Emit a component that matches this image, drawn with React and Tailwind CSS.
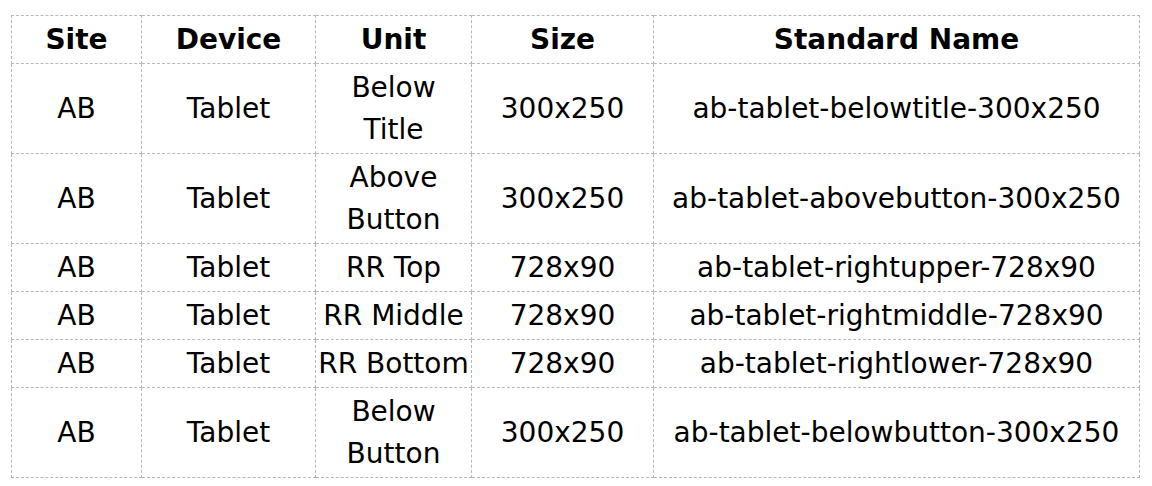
const rows = [
  ["AB", "Tablet", ["Below", "Title"], "300x250", "ab-tablet-belowtitle-300x250"],
  ["AB", "Tablet", ["Above", "Button"], "300x250", "ab-tablet-abovebutton-300x250"],
  ["AB", "Tablet", ["RR Top"], "728x90", "ab-tablet-rightupper-728x90"],
  ["AB", "Tablet", ["RR Middle"], "728x90", "ab-tablet-rightmiddle-728x90"],
  ["AB", "Tablet", ["RR Bottom"], "728x90", "ab-tablet-rightlower-728x90"],
  ["AB", "Tablet", ["Below", "Button"], "300x250", "ab-tablet-belowbutton-300x250"],
];

const heads = ["Site", "Device", "Unit", "Size", "Standard Name"];

const cell = "border border-dashed border-[#b8b8b8] px-0 py-[2.5px] whitespace-nowrap";

export default function App() {
  return (
    <div className="w-[1152px] h-[486px] bg-white pt-[15px] pl-[11px] font-['DejaVu_Sans',Verdana,sans-serif] text-black">
      <table className="table-fixed border-collapse text-[28px] leading-[42px] text-center w-[1128px]">
        <colgroup>
          <col className="w-[130px]" />
          <col className="w-[174px]" />
          <col className="w-[156px]" />
          <col className="w-[182px]" />
          <col className="w-[486px]" />
        </colgroup>
        <thead>
          <tr>
            {heads.map((h) => (
              <th key={h} className={cell + " font-bold"}>
                {h}
              </th>
            ))}
          </tr>
        </thead>
        <tbody>
          {rows.map((r, i) => (
            <tr key={i}>
              {r.map((c, j) => (
                <td key={j} className={cell + " font-normal"}>
                  {Array.isArray(c)
                    ? c.map((line, k) => (
                        <span key={k} className="block">
                          {line}
                        </span>
                      ))
                    : c}
                </td>
              ))}
            </tr>
          ))}
        </tbody>
      </table>
    </div>
  );
}
